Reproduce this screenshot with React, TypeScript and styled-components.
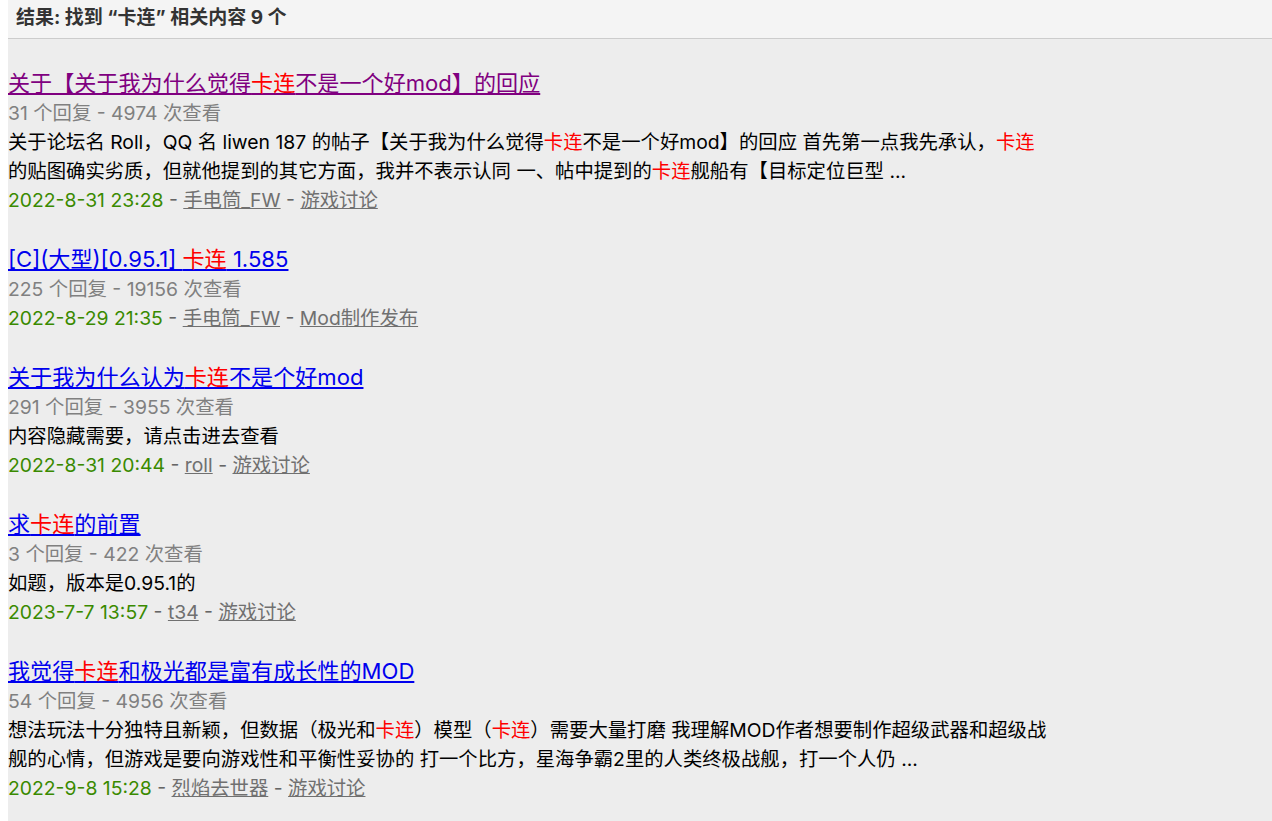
import React from "react";
import styled, { createGlobalStyle } from "styled-components";

const GlobalStyle = createGlobalStyle`
  html, body { margin: 0; padding: 0; background: #ffffff; }
  body { font-family: "Inter", "Noto Sans CJK SC", sans-serif; }
`;

const Page = styled.div`
  padding-left: 8px;
  min-height: 821px;
  box-sizing: border-box;
  background: #ffffff;
`;

const Panel = styled.div`
  background: #ededed;
  min-height: 821px;
`;

const Header = styled.div`
  height: 38px;
  line-height: 36px;
  background: #f4f4f4;
  border-bottom: 1px solid #cccccc;
  padding-left: 8px;
  font-size: 19px;
  font-weight: bold;
  color: #333333;
`;

const List = styled.div`
  display: flex;
  flex-direction: column;
`;

const Item = styled.div`
  margin-top: 29px;
  font-size: 19.35px;
  line-height: 29px;
`;

const Title = styled.a<{ $visited?: boolean }>`
  display: inline-block;
  font-size: 22.1px;
  line-height: 30px;
  color: ${(p) => (p.$visited ? "#800080" : "#0000ee")};
  text-decoration: underline;
  cursor: pointer;
`;

const Hl = styled.span`
  color: #ff0000;
`;

const Meta = styled.div`
  color: #808080;
`;

const Snippet = styled.div`
  color: #000000;
`;

const SnippetLine = styled.div`
  white-space: nowrap;
`;

const Info = styled.div`
  color: #666666;
`;

const DateText = styled.span`
  color: #3a8a00;
`;

const InfoLink = styled.a`
  color: #707070;
  text-decoration: underline;
  cursor: pointer;
`;

const highlight = (text: string) => {
  const parts = text.split("卡连");
  const out: React.ReactNode[] = [];
  parts.forEach((p, i) => {
    if (i > 0) out.push(<Hl key={"h" + i}>卡连</Hl>);
    if (p) out.push(<React.Fragment key={"t" + i}>{p}</React.Fragment>);
  });
  return out;
};

type Result = {
  title: string;
  visited?: boolean;
  replies: number;
  views: number;
  snippet?: string[];
  date: string;
  author: string;
  forum: string;
};

const results: Result[] = [
  {
    title: "关于【关于我为什么觉得卡连不是一个好mod】的回应",
    visited: true,
    replies: 31,
    views: 4974,
    snippet: [
      "关于论坛名 Roll，QQ 名 liwen 187 的帖子【关于我为什么觉得卡连不是一个好mod】的回应 首先第一点我先承认，卡连",
      "的贴图确实劣质，但就他提到的其它方面，我并不表示认同 一、帖中提到的卡连舰船有【目标定位巨型 ...",
    ],
    date: "2022-8-31 23:28",
    author: "手电筒_FW",
    forum: "游戏讨论",
  },
  {
    title: "[C](大型)[0.95.1] 卡连 1.585",
    replies: 225,
    views: 19156,
    date: "2022-8-29 21:35",
    author: "手电筒_FW",
    forum: "Mod制作发布",
  },
  {
    title: "关于我为什么认为卡连不是个好mod",
    replies: 291,
    views: 3955,
    snippet: ["内容隐藏需要，请点击进去查看"],
    date: "2022-8-31 20:44",
    author: "roll",
    forum: "游戏讨论",
  },
  {
    title: "求卡连的前置",
    replies: 3,
    views: 422,
    snippet: ["如题，版本是0.95.1的"],
    date: "2023-7-7 13:57",
    author: "t34",
    forum: "游戏讨论",
  },
  {
    title: "我觉得卡连和极光都是富有成长性的MOD",
    replies: 54,
    views: 4956,
    snippet: [
      "想法玩法十分独特且新颖，但数据（极光和卡连）模型（卡连）需要大量打磨 我理解MOD作者想要制作超级武器和超级战",
      "舰的心情，但游戏是要向游戏性和平衡性妥协的 打一个比方，星海争霸2里的人类终极战舰，打一个人仍 ...",
    ],
    date: "2022-9-8 15:28",
    author: "烈焰去世器",
    forum: "游戏讨论",
  },
];

export default function App() {
  return (
    <>
      <GlobalStyle />
      <Page>
        <Panel>
          <Header>结果: 找到 “卡连” 相关内容 9 个</Header>
          <List>
            {results.map((r, idx) => (
              <Item key={idx}>
                <Title $visited={r.visited}>{highlight(r.title)}</Title>
                <Meta>
                  {r.replies} 个回复 - {r.views} 次查看
                </Meta>
                {r.snippet && (
                  <Snippet>
                    {r.snippet.map((line, i) => (
                      <SnippetLine key={i}>{highlight(line)}</SnippetLine>
                    ))}
                  </Snippet>
                )}
                <Info>
                  <DateText>{r.date}</DateText> - <InfoLink>{r.author}</InfoLink> -{" "}
                  <InfoLink>{r.forum}</InfoLink>
                </Info>
              </Item>
            ))}
          </List>
        </Panel>
      </Page>
    </>
  );
}
